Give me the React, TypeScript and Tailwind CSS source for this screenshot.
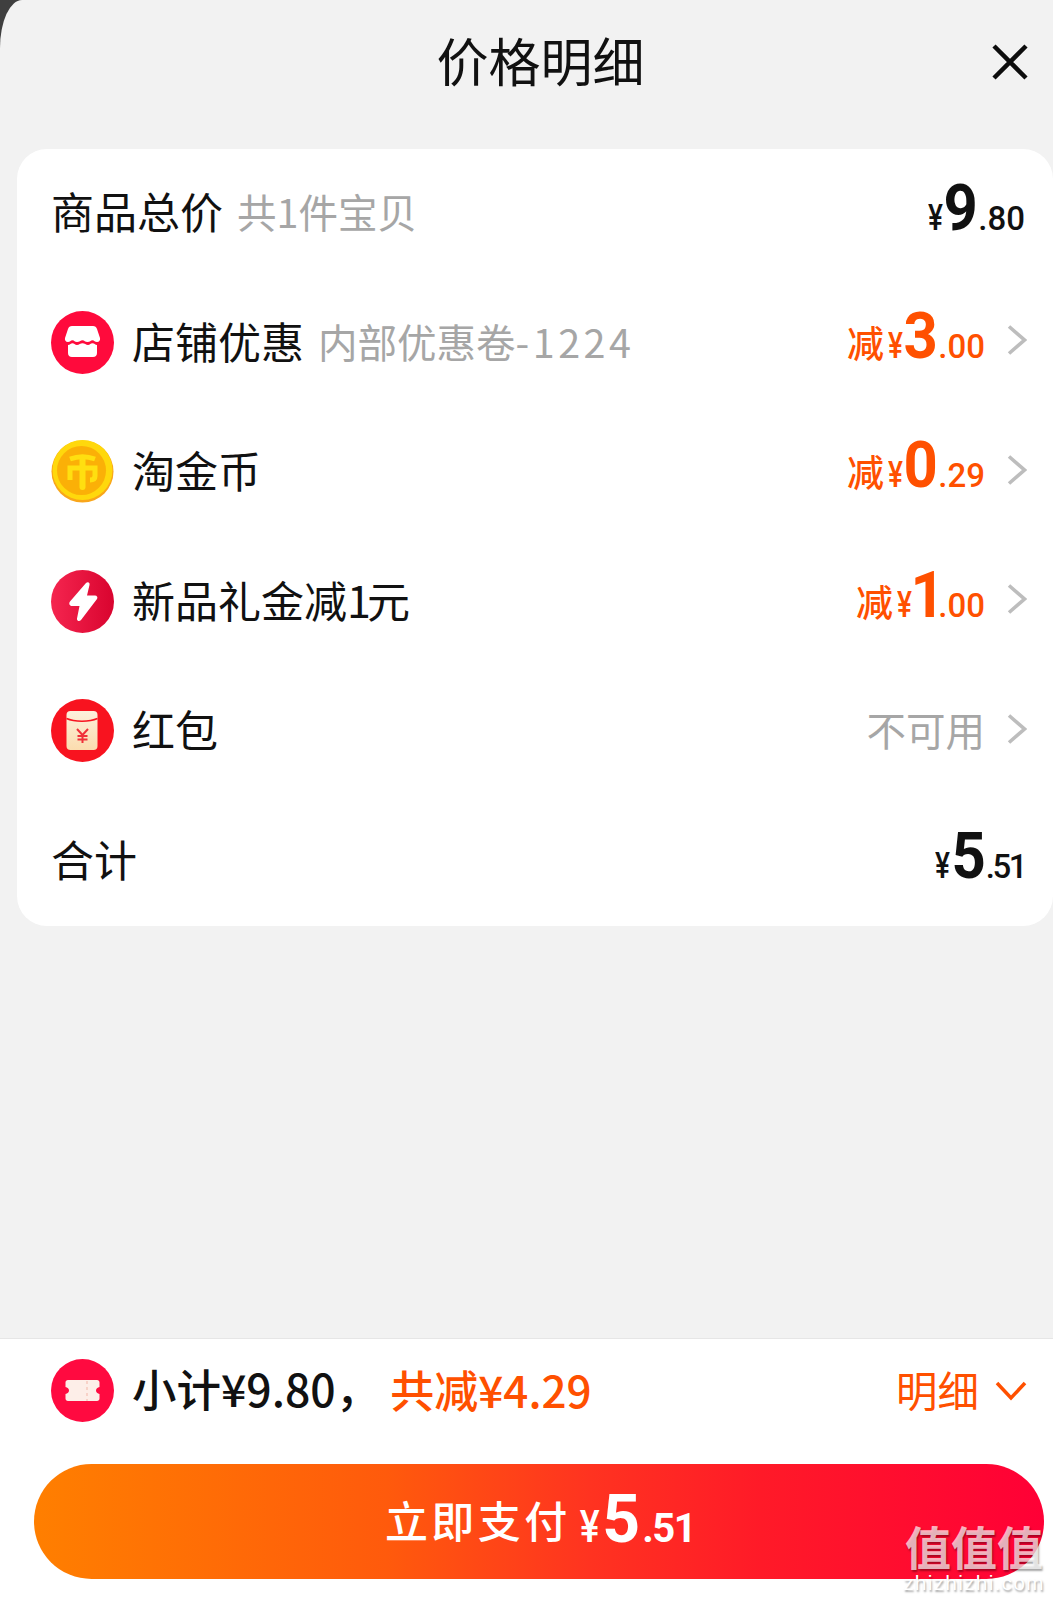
import type { ReactNode } from "react";

const cjk = "font-['Noto_Sans_CJK_SC','Noto_Sans',sans-serif]";

function Chevron() {
  return (
    <svg width="20" height="32" viewBox="0 0 20 32" fill="none" className="ml-[22px] shrink-0">
      <path d="M2 2.500 17.500 16 2 29.500" stroke="#bdbdbd" strokeWidth="3.600" />
    </svg>
  );
}

function Price({ whole, cents, minus, color, narrow, tight }: { whole: string; cents: string; minus?: boolean; color: string; narrow?: boolean; tight?: boolean }) {
  return (
    <span className={`flex items-baseline font-['Roboto',sans-serif] ${color} ${minus ? "mb-[8px]" : "mr-[2px] mb-[4px]"}`}>
      {minus && <span className={`${cjk} mr-[4px] text-[37px] leading-none font-medium`}>减</span>}
      <span className="-mx-[2px] inline-block origin-center scale-x-[0.78] text-[36px] leading-none font-medium">¥</span>
      <span className={`inline-block origin-center text-[65px] leading-none font-bold scale-x-[0.92] ${narrow ? "-mr-[8px] -ml-[3px]" : "-mx-[1px]"}`}>{whole}</span>
      <span className={`text-[33px] leading-none font-medium ${tight ? "tracking-[-2.500px]" : ""}`}>.{cents}</span>
    </span>
  );
}

function Row({ icon, label, sub, right }: { icon?: ReactNode; label: ReactNode; sub?: ReactNode; right: ReactNode }) {
  return (
    <div className="flex h-[129.5px] items-center pr-[26px] pb-[6px] pl-[34px]">
      {icon && <div className="mt-[4px] mr-[18px] h-[63px] w-[63px] shrink-0">{icon}</div>}
      <span className="text-[43px] leading-none text-[#111]">{label}</span>
      {sub && <span className="ml-[14px] text-[39.5px] leading-none text-[#a6a6a6]">{sub}</span>}
      <div className="ml-auto flex items-center">{right}</div>
    </div>
  );
}

function ShopIcon() {
  return (
    <svg viewBox="0 0 63 63" className="h-full w-full">
      <circle cx="31.500" cy="31.500" r="31.500" fill="#ff0a3c" />
      <path d="M21 15h21c2 0 3.400 1.200 4 3l3 9c.5 2-.7 4-3 4-2.200 0-2.700-1.800-4.500-1.800S39 31 36.500 31 33.500 29.200 31.500 29.200 28.500 31 26 31s-2.500-1.800-4.500-1.800S19 31 17 31c-2.300 0-3.500-2-3-4l3-9c.6-1.800 2-3 4-3Z" fill="#fff" />
      <path d="M17 34c2 0 3-1.700 4.500-1.700S24 34 26 34s3.500-1.700 5.500-1.700S35 34 37 34s2.500-1.700 4.500-1.700S44 34 46 34v8c0 2.500-1.500 4-4 4H21c-2.500 0-4-1.500-4-4Z" fill="#fff" />
    </svg>
  );
}

function CoinIcon() {
  return (
    <svg viewBox="0 0 63 63" className="h-full w-full">
      <circle cx="31.500" cy="31.500" r="31" fill="#f9a61a" />
      <circle cx="31.500" cy="30" r="30" fill="#ffd80c" />
      <circle cx="30.500" cy="30.500" r="24.500" fill="#fbb007" />
      <g stroke="#ffdf10" fill="none" strokeWidth="5">
        <path d="M19 19c8-3 17-3 25 0" />
        <path d="M19 40V28h25v8c0 3-2 4-5 4" />
        <path d="M31.500 19v28" strokeWidth="6" strokeLinecap="round" />
      </g>
    </svg>
  );
}

function BoltIcon() {
  return (
    <svg viewBox="0 0 63 63" className="h-full w-full">
      <defs>
        <linearGradient id="boltBg" x1="0" x2="1" y1="0" y2="0">
          <stop offset="0" stopColor="#f5254f" />
          <stop offset="1" stopColor="#d9042f" />
        </linearGradient>
      </defs>
      <circle cx="31.500" cy="31.500" r="31.500" fill="url(#boltBg)" />
      <path d="M35 13c2-1.500 4-.5 3.500 2L36 25.500h8c2 0 3 2 2 3.500L30 50c-1.500 2-4.500 1-4-1.500l2.500-12.500H21c-2.500 0-3.500-2.500-2-4.500Z" fill="#fff" />
    </svg>
  );
}

function PacketIcon() {
  return (
    <svg viewBox="0 0 63 63" className="h-full w-full">
      <defs>
        <linearGradient id="packetBg" x1="0" x2="0" y1="0" y2="1">
          <stop offset="0" stopColor="#fdf0dc" />
          <stop offset="1" stopColor="#fbdcae" />
        </linearGradient>
      </defs>
      <circle cx="31.500" cy="31.500" r="31.500" fill="#f8131f" />
      <rect x="15.500" y="12" width="31" height="39" rx="4" fill="url(#packetBg)" />
      <path d="M15.500 19.500c8 3.500 23 3.500 31 0" stroke="#f8131f" strokeWidth="1.500" fill="none" />
      <path d="M26 30l5.500 6 5.500-6M31.500 36v8M26.500 37h10M26.500 40.500h10" stroke="#f0313a" strokeWidth="2" fill="none" />
    </svg>
  );
}

function TicketIcon() {
  return (
    <svg viewBox="0 0 63 63" className="h-full w-full">
      <circle cx="31.500" cy="31.500" r="31.500" fill="#ff0a40" />
      <path d="M17 21h29c1.500 0 2.500 1 2.500 2.500v4.500c-2 .6-3.500 1.800-3.500 3.500s1.500 3 3.500 3.500v4.500c0 1.500-1 2.500-2.500 2.500H17c-1.500 0-2.500-1-2.500-2.500V35c2-.5 3.500-1.800 3.500-3.500S16.500 28.600 14.500 28v-4.500c0-1.500 1-2.500 2.500-2.500Z" fill="#fdeee8" />
      <path d="M36 22v20" stroke="#f6c9bd" strokeWidth="1.500" strokeDasharray="3 3" />
    </svg>
  );
}

export default function App() {
  return (
    <div className={`h-[1601px] w-[1053px] overflow-hidden bg-[#3f3f3f] ${cjk}`}>
      <div className="flex h-full flex-col rounded-tl-[22px_48px] bg-[#f2f2f2]">
        <header className="relative flex h-[149px] shrink-0 items-start justify-center pt-[30px] pl-[28px]">
          <h1 className="text-[52px] leading-[60px] font-normal text-[#111]">价格明细</h1>
          <svg width="38" height="38" viewBox="0 0 38 38" className="absolute top-[43px] right-[24px]">
            <path d="M3 3 35 35M35 3 3 35" stroke="#0d0d0d" strokeWidth="4.500" />
          </svg>
        </header>

        <section className="ml-[17px] shrink-0 rounded-[30px] bg-white">
          <Row
            label="商品总价"
            sub="共1件宝贝"
            right={<Price whole="9" cents="80" color="text-[#111]" />}
          />
          <Row
            icon={<ShopIcon />}
            label="店铺优惠"
            sub={<>内部优惠卷<span className="tracking-[3.500px]">-1224</span></>}
            right={<><Price minus whole="3" cents="00" color="text-[#ff5000]" /><Chevron /></>}
          />
          <Row
            icon={<CoinIcon />}
            label="淘金币"
            right={<><Price minus whole="0" cents="29" color="text-[#ff5000]" /><Chevron /></>}
          />
          <Row
            icon={<BoltIcon />}
            label={<>新品礼金减<span className="tracking-[-4px]">1</span>元</>}
            right={<><Price minus narrow whole="1" cents="00" color="text-[#ff5000]" /><Chevron /></>}
          />
          <Row
            icon={<PacketIcon />}
            label="红包"
            right={<><span className="text-[39.500px] leading-none text-[#a6a6a6]">不可用</span><Chevron /></>}
          />
          <Row label="合计" right={<Price tight whole="5" cents="51" color="text-[#111]" />} />
        </section>

        <footer className="relative mt-auto h-[263px] shrink-0 border-t border-[#e6e6e6] bg-white">
          <div className="flex h-[103px] items-center pr-[26px] pl-[51px]">
            <div className="mr-[18px] h-[63px] w-[63px] shrink-0"><TicketIcon /></div>
            <span className="mb-[4px] text-[44.500px] leading-none font-medium text-[#111]">小计¥9.80，</span>
            <span className="mb-[4px] ml-[10px] text-[44px] leading-none font-medium text-[#ff5000]">共减¥4.29</span>
            <span className="mb-[2px] ml-auto text-[41.500px] leading-none text-[#ff5000]">明细</span>
            <svg width="32" height="22" viewBox="0 0 32 22" fill="none" className="ml-[16px]">
              <path d="M2 3 16 18 30 3" stroke="#ff5000" strokeWidth="3.500" />
            </svg>
          </div>
          <button className="mt-[22px] ml-[34px] flex h-[115px] w-[1010px] items-center justify-center rounded-full bg-[linear-gradient(90deg,#ff7f00,#ff5a0c_35%,#ff3320_55%,#ff1a28_72%,#ff0036)] pb-[4px] pl-[2px] text-white">
            <span className="text-[43px] leading-none font-medium tracking-[3.500px]">立即支付</span>
            <span className="ml-[8px] flex items-baseline font-['Roboto',sans-serif]">
              <span className="-mx-[1px] inline-block scale-x-[0.85] text-[44px] leading-none font-medium">¥</span>
              <span className="px-[2px] text-[66px] leading-none font-bold">5</span>
              <span className="text-[40px] leading-none font-bold tracking-[-1.500px]">.51</span>
            </span>
          </button>
          <div className="pointer-events-none absolute right-[9px] bottom-[7px] flex w-[140px] flex-col items-center text-white/70 [text-shadow:1px_2px_2px_rgba(0,0,0,0.35)]">
            <span className="text-[46px] leading-[40px] font-bold whitespace-nowrap">值值值</span>
            <span className="mt-[7px] font-['Liberation_Sans',sans-serif] text-[21px] leading-[22px] tracking-[1.200px] whitespace-nowrap text-white">zhizhizhi.com</span>
          </div>
        </footer>
      </div>
    </div>
  );
}
